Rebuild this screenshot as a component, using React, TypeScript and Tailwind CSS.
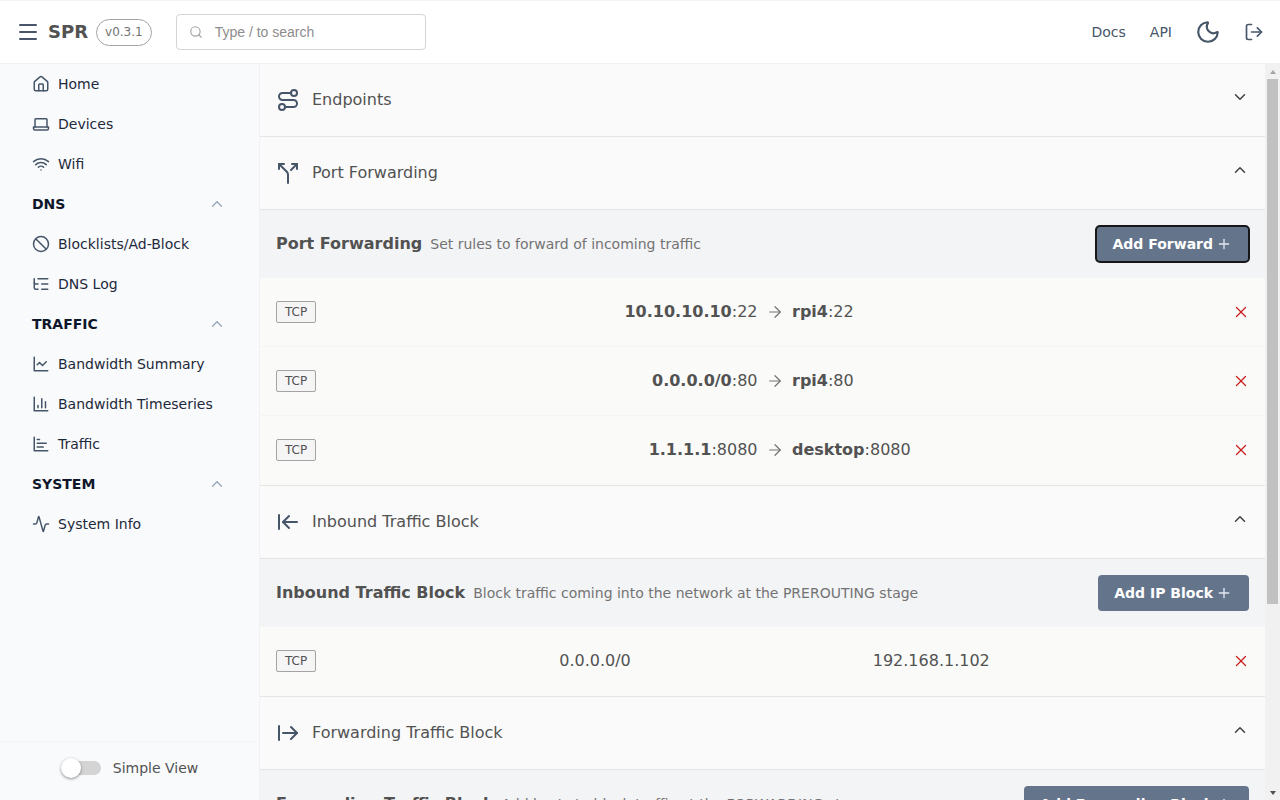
import React from 'react';
import {
  Activity,
  ArrowLeftToLine,
  ArrowRight,
  ArrowRightFromLine,
  Ban,
  ChevronDown,
  ChevronUp,
  House,
  ListTree,
  LogOut,
  Menu,
  Moon,
  Plus,
  Route,
  Search,
  Split,
  Wifi,
  X,
} from 'lucide-react';

type IconProps = { size?: number; strokeWidth?: number; className?: string };

const Svg = ({ size = 18, strokeWidth = 2, className, children }: IconProps & { children: React.ReactNode }) => (
  <svg
    width={size}
    height={size}
    viewBox="0 0 24 24"
    fill="none"
    stroke="currentColor"
    strokeWidth={strokeWidth}
    strokeLinecap="round"
    strokeLinejoin="round"
    className={className}
  >
    {children}
  </svg>
);

const LaptopIcon = (p: IconProps) => (
  <Svg {...p}>
    <path d="M4 16V6a1 1 0 0 1 1-1h14a1 1 0 0 1 1 1v10" />
    <path d="M2 16h20v2a2 2 0 0 1-2 2H4a2 2 0 0 1-2-2z" />
  </Svg>
);

const LineChartIcon = (p: IconProps) => (
  <Svg {...p}>
    <path d="M3 3v18h18" />
    <path d="m19 9-5 5-4-4-3 3" />
  </Svg>
);

const BarChartIcon = (p: IconProps) => (
  <Svg {...p}>
    <path d="M3 3v18h18" />
    <path d="M18 17V9" />
    <path d="M13 17V5" />
    <path d="M8 17v-3" />
  </Svg>
);

const BarChartHorizontalIcon = (p: IconProps) => (
  <Svg {...p}>
    <path d="M3 3v18h18" />
    <path d="M7 16h8" />
    <path d="M7 11h12" />
    <path d="M7 6h3" />
  </Svg>
);

const nav = [
  { type: 'item', label: 'Home', icon: House },
  { type: 'item', label: 'Devices', icon: LaptopIcon },
  { type: 'item', label: 'Wifi', icon: Wifi },
  { type: 'group', label: 'DNS' },
  { type: 'item', label: 'Blocklists/Ad-Block', icon: Ban },
  { type: 'item', label: 'DNS Log', icon: ListTree },
  { type: 'group', label: 'TRAFFIC' },
  { type: 'item', label: 'Bandwidth Summary', icon: LineChartIcon },
  { type: 'item', label: 'Bandwidth Timeseries', icon: BarChartIcon },
  { type: 'item', label: 'Traffic', icon: BarChartHorizontalIcon },
  { type: 'group', label: 'SYSTEM' },
  { type: 'item', label: 'System Info', icon: Activity },
];

const forwards = [
  { src: '10.10.10.10', srcPort: '22', dst: 'rpi4', dstPort: '22' },
  { src: '0.0.0.0/0', srcPort: '80', dst: 'rpi4', dstPort: '80' },
  { src: '1.1.1.1', srcPort: '8080', dst: 'desktop', dstPort: '8080' },
];

const Badge = () => (
  <div className="flex h-[22px] w-10 items-center justify-center rounded-xs border border-[#a3a3a3] bg-[#f5f5f5] text-xs text-[#525252]">
    TCP
  </div>
);

const SectionHeader = ({ icon: Icon, title, open = true }: { icon: React.ElementType; title: string; open?: boolean }) => (
  <div className="flex h-[73px] items-center border-b border-[#e5e5e5] px-4">
    <Icon size={24} strokeWidth={2} className="text-[#475569]" />
    <span className="ml-3 flex-1 text-base text-[#525252]">{title}</span>
    {open ? (
      <ChevronUp size={18} className="-mt-[6px] text-[#404040]" />
    ) : (
      <ChevronDown size={18} className="-mt-[6px] text-[#404040]" />
    )}
  </div>
);

const PanelHeader = ({ title, sub, button, focused }: { title: string; sub: string; button: string; focused?: boolean }) => (
  <div className="flex h-[68px] items-center justify-between bg-[#f3f4f6] px-4">
    <div className="flex items-baseline gap-2">
      <span className="text-base font-bold text-[#525252]">{title}</span>
      <span className="text-sm text-[#737373]">{sub}</span>
    </div>
    <button
      className={`flex h-9 items-center gap-[3px] rounded bg-[#64748b] pl-4 pr-[17px] text-sm font-semibold text-white ${focused ? 'outline-2 -outline-offset-1 outline-[#171717]' : ''}`}
    >
      {button}
      <Plus size={16} className="text-[#e2e8f0]" />
    </button>
  </div>
);

const RemoveIcon = () => <X size={18} strokeWidth={1.7} className="-mr-px text-[#c81e1e]" />;

export default function App() {
  return (
    <div className="flex h-screen w-full flex-col overflow-hidden bg-white font-['DejaVu_Sans',sans-serif]">
      {/* Top bar */}
      <header className="flex h-16 shrink-0 items-center border-t border-b border-[#f1f5f9] border-b-[#f1f1f1] bg-white px-4">
        <Menu size={24} className="text-[#475569]" />
        <span className="ml-[8px] text-lg font-bold text-[#525252]">SPR</span>
        <span className="ml-2 flex h-[27px] items-center rounded-full border border-[#a3a3a3] px-2 text-xs text-[#737373]">v0.3.1</span>
        <div className="ml-6 flex h-9 w-[250px] items-center rounded border border-[#d4d4d4] pl-3">
          <Search size={14} className="text-[#a3a3a3]" />
          <span className="ml-[12px] font-['Liberation_Sans',sans-serif] text-sm text-[#8c8c8c]">Type / to search</span>
        </div>
        <div className="ml-auto flex items-center text-sm text-[#475569]">
          <span>Docs</span>
          <span className="ml-6">API</span>
          <Moon size={26} className="ml-[23px]" />
          <LogOut size={20} className="ml-[23px]" />
        </div>
      </header>

      <div className="flex min-h-0 flex-1">
        {/* Sidebar */}
        <aside className="flex w-[260px] shrink-0 flex-col border-r border-[#f1f1f4] bg-[#f8fafc]">
          <nav className="flex-1 pl-8 pr-[33px]">
            {nav.map(entry =>
              entry.type === 'group' ? (
                <div key={entry.label} className="flex h-10 items-center justify-between">
                  <span className="text-sm font-bold text-[#0f172a]">{entry.label}</span>
                  <ChevronUp size={18} strokeWidth={1.6} className="text-[#94a3b8]" />
                </div>
              ) : (
                <div key={entry.label} className="flex h-10 items-center text-sm text-[#1e293b]">
                  {entry.icon && <entry.icon size={18} strokeWidth={2} className="text-[#475569]" />}
                  <span className="ml-2">{entry.label}</span>
                </div>
              ),
            )}
          </nav>
          <div className="flex h-[59px] items-center justify-center border-t border-[#f1f5f9] pb-[6px] pl-px">
            <div className="relative h-[14px] w-[39px] rounded-full bg-[#d4d4d4]">
              <div className="absolute -left-[1px] -top-[3px] h-5 w-5 rounded-full bg-white shadow-[0_1px_3px_rgba(0,0,0,0.45)]" />
            </div>
            <span className="ml-3 text-sm text-[#525252]">Simple View</span>
          </div>
        </aside>

        {/* Main */}
        <main className="min-w-0 flex-1 overflow-y-auto bg-[#fafafa]">
          <SectionHeader icon={Route} title="Endpoints" open={false} />
          <SectionHeader icon={Split} title="Port Forwarding" />
          <PanelHeader title="Port Forwarding" sub="Set rules to forward of incoming traffic" button="Add Forward" focused />
          <div className="border-b border-[#e5e5e5]">
            {forwards.map((f, i) => (
              <div
                key={f.src}
                className={`grid h-[69px] grid-cols-[40px_441.5px_34.5px_1fr] items-center border-b bg-[#fafaf9] px-4 text-base text-[#525252] ${i < 2 ? 'border-[#f5f5f4]' : 'border-transparent'}`}
              >
                <Badge />
                <div className="text-right">
                  <span className="font-bold">{f.src}</span>:{f.srcPort}
                </div>
                <div className="flex justify-center">
                  <ArrowRight size={18} strokeWidth={1.6} className="text-[#737373]" />
                </div>
                <div className="flex items-center justify-between">
                  <div>
                    <span className="font-bold">{f.dst}</span>:{f.dstPort}
                  </div>
                  <RemoveIcon />
                </div>
              </div>
            ))}
          </div>

          <SectionHeader icon={ArrowLeftToLine} title="Inbound Traffic Block" />
          <PanelHeader title="Inbound Traffic Block" sub="Block traffic coming into the network at the PREROUTING stage" button="Add IP Block" />
          <div className="grid h-[70px] grid-cols-[40px_111px_336px_336.5px_1fr] items-center border-b border-[#e5e5e5] bg-[#fafaf9] px-4 pb-px text-base text-[#525252]">
            <Badge />
            <div />
            <div className="text-center">0.0.0.0/0</div>
            <div className="text-center">192.168.1.102</div>
            <div className="flex justify-end">
              <RemoveIcon />
            </div>
          </div>

          <SectionHeader icon={ArrowRightFromLine} title="Forwarding Traffic Block" />
          <PanelHeader title="Forwarding Traffic Block" sub="Add hosts to block traffic at the FORWARDING stage" button="Add Forwarding Block" />
          <div className="h-[216px] bg-[#fafaf9]" />
        </main>

        {/* Scrollbar column, the browser here hides the native one */}
        <div className="flex w-[15px] shrink-0 flex-col items-center bg-[#f1f1f1]">
          <div className="flex h-[15px] items-center justify-center">
            <div className="h-0 w-0 border-x-[3.5px] border-b-[4px] border-x-transparent border-b-[#a3a3a3]" />
          </div>
          <div className="h-[525px] w-[11px] bg-[#c1c1c1]" />
          <div className="flex-1" />
          <div className="flex h-[15px] items-center justify-center">
            <div className="h-0 w-0 border-x-[3.5px] border-t-[4px] border-x-transparent border-t-[#505050]" />
          </div>
        </div>
      </div>
    </div>
  );
}
